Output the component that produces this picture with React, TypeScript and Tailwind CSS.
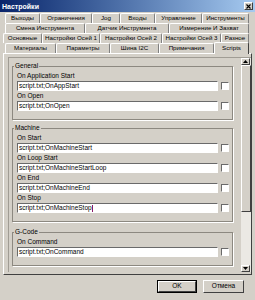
const tabRows: { ml: string; tabs: [string, string][] }[] = [
  {
    ml: "ml-[5px]",
    tabs: [
      ["Выходы", "w-[35px]"],
      ["Ограничения", "w-[52px]"],
      ["Jog", "w-[28px]"],
      ["Входы", "w-[35px]"],
      ["Управление", "w-[47px]"],
      ["Инструменты", "w-[47px]"],
    ],
  },
  {
    ml: "ml-[5px]",
    tabs: [
      ["Смена Инструмента", "w-[80px]"],
      ["Датчик Инструмента", "w-[84px]"],
      ["Измерение И Захват", "w-[80px]"],
    ],
  },
  {
    ml: "ml-[3px]",
    tabs: [
      ["Основные", "w-[39px]"],
      ["Настройки Осей 1", "w-[58px]"],
      ["Настройки Осей 2", "w-[62px]"],
      ["Настройки Осей 3", "w-[59px]"],
      ["Разное", "w-[28px]"],
    ],
  },
];

const frontRow: [string, string][] = [
  ["Материалы", "w-[51px]"],
  ["Параметры", "w-[54px]"],
  ["Шина I2C", "w-[49px]"],
  ["Примечания", "w-[55px]"],
];

const groups = [
  {
    title: "General",
    gap: "mt-0",
    fields: [
      ["On Application Start", "script.txt;OnAppStart"],
      ["On Open", "script.txt;OnOpen"],
    ],
  },
  {
    title: "Machine",
    gap: "mt-[4px]",
    fields: [
      ["On Start", "script.txt;OnMachineStart"],
      ["On Loop Start", "script.txt;OnMachineStartLoop"],
      ["On End", "script.txt;OnMachineEnd"],
      ["On Stop", "script.txt;OnMachineStop"],
    ],
  },
  {
    title: "G-Code",
    gap: "mt-[6px]",
    fields: [["On Command", "script.txt;OnCommand"]],
  },
];

function Tab({ label, width }: { label: string; width: string }) {
  return (
    <div
      className={`${width} flex h-[10px] shrink-0 items-center justify-center rounded-t-[2px] border-l border-t border-r border-white border-r-[#808080] leading-none`}
    >
      {label}
    </div>
  );
}

function Field({ label, value, caret }: { label: string; value: string; caret?: boolean }) {
  return (
    <div>
      <div className="h-[10px] leading-[10px]">{label}</div>
      <div className="flex items-center gap-[3px]">
        <div className="flex h-[10px] flex-1 items-center border border-t-[#6a6a6a] border-l-[#6a6a6a] border-b-white border-r-white bg-white pl-[1px] leading-none">
          {value}
          {caret && <span className="h-[7px] w-px bg-[#8a1a6a]" />}
        </div>
        <div className="h-[8px] w-[8px] border border-t-[#6a6a6a] border-l-[#6a6a6a] border-b-white border-r-white bg-white" />
      </div>
    </div>
  );
}

function Arrow({ up }: { up?: boolean }) {
  return (
    <div className="flex h-[7px] w-[9px] items-center justify-center border border-t-white border-l-white border-b-[#404040] border-r-[#404040] bg-[#d4d0c8]">
      <svg width="5" height="3" viewBox="0 0 5 3">
        <path d={up ? "M0 3 L2.5 0 L5 3Z" : "M0 0 L2.5 3 L5 0Z"} fill="#000" />
      </svg>
    </div>
  );
}

export default function App() {
  return (
    <div className="flex h-[300px] w-[255px] flex-col overflow-hidden bg-[#d4d0c8] font-['Liberation_Sans',Arial,sans-serif] text-[6.5px] text-black">
      <div className="flex h-[12px] items-center justify-between bg-gradient-to-r from-[#0a246a] to-[#a6caf0] pl-[2px] pr-[2px]">
        <span className="text-[7px] font-bold leading-none text-white">Настройки</span>
        <div className="flex h-[8px] w-[9px] items-center justify-center border border-t-white border-l-white border-b-[#404040] border-r-[#404040] bg-[#d4d0c8]">
          <svg width="5" height="5" viewBox="0 0 5 5">
            <path d="M0.5 0.5 L4.5 4.5 M4.5 0.5 L0.5 4.5" stroke="#000" strokeWidth="1.1" />
          </svg>
        </div>
      </div>

      <div className="mt-[1px] text-[6.2px]">
        {tabRows.map((row, i) => (
          <div key={i} className={`flex h-[10px] ${row.ml}`}>
            {row.tabs.map(([label, w]) => (
              <Tab key={label} label={label} width={w} />
            ))}
          </div>
        ))}
        <div className="ml-[5px] flex h-[10px] items-start">
          {frontRow.map(([label, w]) => (
            <Tab key={label} label={label} width={w} />
          ))}
          <div className="relative z-10 -mt-[1px] flex h-[12px] w-[35px] items-start justify-center rounded-t-[2px] border-l border-t border-r border-white border-r-[#404040] bg-[#d4d0c8] pt-[2px] leading-none">
            Scripts
          </div>
        </div>
      </div>

      <div className="ml-[3px] h-[222px] w-[249px] border border-t-white border-l-white border-b-[#404040] border-r-[#404040] pb-[1px] pl-[4px] pt-[3px]">
        <div className="flex h-[215px] border-t border-l border-t-[#a09c94] border-l-[#a09c94]">
          <div className="flex-1 overflow-hidden pl-[3px] pr-[7px] pt-[4px]">
            {groups.map((g) => (
              <fieldset
                key={g.title}
                className={`${g.gap} border border-[#8c8880] pb-[8px] pl-[4px] pr-[3px] pt-[1px] shadow-[1px_1px_0_#ffffff]`}
              >
                <legend className="-ml-[3px] px-[1px] leading-[8px]">{g.title}</legend>
                {g.fields.map(([label, value]) => (
                  <Field key={label} label={label} value={value} caret={label === "On Stop"} />
                ))}
              </fieldset>
            ))}
          </div>
          <div className="flex w-[11px] flex-col border-l border-[#d4d0c8] bg-[#ebe9e4]">
            <Arrow up />
            <div className="h-[147px] border border-t-white border-l-white border-b-[#404040] border-r-[#404040] bg-[#d4d0c8]" />
            <div className="flex-1" />
            <Arrow />
          </div>
        </div>
      </div>

      <div className="mt-[5px] flex justify-end gap-[6px] pr-[11px]">
        <div className="flex h-[13px] w-[40px] items-center justify-center border border-black">
          <div className="flex h-full w-full items-center justify-center border border-t-white border-l-white border-b-[#404040] border-r-[#404040] leading-none">
            OK
          </div>
        </div>
        <div className="flex h-[13px] w-[41px] items-center justify-center border border-t-white border-l-white border-b-[#404040] border-r-[#404040] leading-none">
          Отмена
        </div>
      </div>
    </div>
  );
}
